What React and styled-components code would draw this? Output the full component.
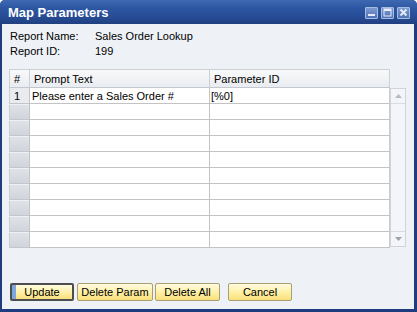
import React from 'react';
import styled, { createGlobalStyle } from 'styled-components';

const Global = createGlobalStyle`
    html, body {
        margin: 0;
        padding: 0;
        background: #ffffff;
    }
    * {
        box-sizing: border-box;
    }
`

const Window = styled.div`
    width: 417px;
    height: 312px;
    display: flex;
    flex-direction: column;
    background: #1e3c7e;
    border-radius: 5px 5px 0 0;
    overflow: hidden;
    font-family: "Liberation Sans", Arial, sans-serif;
    font-size: 11px;
    color: #000;
`

const TitleBar = styled.div`
    height: 24px;
    display: flex;
    align-items: center;
    justify-content: space-between;
    padding: 0 7px 0 8px;
    background: linear-gradient(#4069b3 0%, #2d56a2 35%, #274c95 70%, #203f80 100%);
`

const Title = styled.span`
    color: #fff;
    font-weight: bold;
    font-size: 13px;
`

const Controls = styled.div`
    display: flex;
    gap: 3px;
    margin-top: 1px;
`

const Ctrl = styled.div`
    width: 13px;
    height: 12px;
    background: linear-gradient(#7d9ad2, #5072b6);
    border: 1px solid #a7bce3;
    border-radius: 1px;
    display: flex;
    align-items: center;
    justify-content: center;
`

const Body = styled.div`
    flex: 1;
    margin: 0 3px 3px 2px;
    background: #eef2f7;
    padding: 4px 0 0 7px;
    display: flex;
    flex-direction: column;
`

const InfoRow = styled.div`
    display: flex;
    height: 15px;
    align-items: center;
    padding-left: 1px;
`

const InfoLabel = styled.span`
    width: 85px;
`

const GridWrap = styled.div`
    margin-top: 11px;
    display: flex;
    width: 397px;
`

const Table = styled.div`
    width: 381px;
    display: flex;
    flex-direction: column;
`

const Row = styled.div`
    display: grid;
    grid-template-columns: 20px 180px 181px;
    height: ${p => p.$h}px;
`

const HeadCell = styled.div`
    background: linear-gradient(#f9f9fa, #e9ecf0);
    border-top: 1px solid #cbd0d7;
    border-bottom: 1px solid #c3c8d0;
    border-left: 1px solid #cbd0d7;
    border-right: ${p => p.$last ? '1px solid #cbd0d7' : 'none'};
    padding-left: ${p => p.$pad}px;
    display: flex;
    align-items: center;
`

const NumCell = styled.div`
    border-left: 1px solid #c9ced5;
    border-bottom: 1px solid #c2c6cc;
    background: ${p => p.$filled ? '#e9ebef' : 'linear-gradient(#dfe2e7, #d1d5db)'};
    border-top: ${p => p.$filled ? 'none' : '1px solid #eef0f3'};
    padding-left: 4px;
    display: flex;
    align-items: center;
`

const Cell = styled.div`
    background: #fff;
    border-left: 1px solid #c3c3c3;
    border-bottom: 1px solid #c3c3c3;
    border-right: ${p => p.$last ? '1px solid #c9ced5' : 'none'};
    padding-left: ${p => p.$pad}px;
    display: flex;
    align-items: center;
    white-space: nowrap;
`

const ScrollCol = styled.div`
    width: 16px;
    margin-top: 19px;
    height: 159px;
    background: #f3f5f8;
    border: 1px solid #cfd4db;
    display: flex;
    flex-direction: column;
    justify-content: space-between;
`

const Arrow = styled.div`
    height: 15px;
    display: flex;
    align-items: center;
    justify-content: center;
    border-${p => p.$down ? 'top' : 'bottom'}: 1px solid #d8dce2;
`

const Buttons = styled.div`
    display: flex;
    margin-top: 35px;
    padding-left: 1px;
`

const Btn = styled.div`
    width: ${p => p.$w}px;
    height: 18px;
    margin-right: ${p => p.$mr}px;
    border: ${p => p.$focus ? '2px solid #4d4d4d' : '1px solid #a89f74'};
    border-radius: 2px;
    background: linear-gradient(#fffbe0 0%, #fff1a8 50%, #f7df7a 100%);
    display: flex;
    align-items: center;
    justify-content: center;
    ${p => p.$focus && `
        box-shadow: inset 4px 0 0 #7ea5dd;
    `}
`

const rows = Array.from({ length: 10 }, (_, i) => i === 0
    ? { n: '1', text: 'Please enter a Sales Order #', id: '[%0]' }
    : { n: '', text: '', id: '' });

export default function App() {
    return (
        <>
            <Global />
            <Window>
                <TitleBar>
                    <Title>Map Parameters</Title>
                    <Controls>
                        <Ctrl>
                            <svg width="9" height="9" viewBox="0 0 9 9"><rect x="1" y="6" width="7" height="2" fill="#e6edf9" /></svg>
                        </Ctrl>
                        <Ctrl>
                            <svg width="9" height="9" viewBox="0 0 9 9"><rect x="1" y="1" width="7" height="7" fill="none" stroke="#e6edf9" strokeWidth="1" /><rect x="1" y="1" width="7" height="2" fill="#e6edf9" /></svg>
                        </Ctrl>
                        <Ctrl>
                            <svg width="9" height="9" viewBox="0 0 9 9"><path d="M1.5 1.5 L7.5 7.5 M7.5 1.5 L1.5 7.5" stroke="#e6edf9" strokeWidth="1.8" /></svg>
                        </Ctrl>
                    </Controls>
                </TitleBar>
                <Body>
                    <InfoRow><InfoLabel>Report Name:</InfoLabel><span>Sales Order Lookup</span></InfoRow>
                    <InfoRow><InfoLabel>Report ID:</InfoLabel><span>199</span></InfoRow>
                    <GridWrap>
                        <Table>
                            <Row $h={19}>
                                <HeadCell $pad={4}>#</HeadCell>
                                <HeadCell $pad={4}>Prompt Text</HeadCell>
                                <HeadCell $pad={4} $last>Parameter ID</HeadCell>
                            </Row>
                            {rows.map((r, i) => (
                                <Row key={i} $h={16}>
                                    <NumCell $filled={!!r.n}>{r.n}</NumCell>
                                    <Cell $pad={2}>{r.text}</Cell>
                                    <Cell $pad={1} $last>{r.id}</Cell>
                                </Row>
                            ))}
                        </Table>
                        <ScrollCol>
                            <Arrow>
                                <svg width="7" height="4" viewBox="0 0 7 4"><path d="M0 4 L3.5 0 L7 4 Z" fill="#b4bcc6" /></svg>
                            </Arrow>
                            <Arrow $down>
                                <svg width="7" height="4" viewBox="0 0 7 4"><path d="M0 0 L3.5 4 L7 0 Z" fill="#9aa3ae" /></svg>
                            </Arrow>
                        </ScrollCol>
                    </GridWrap>
                    <Buttons>
                        <Btn $w={64} $mr={3} $focus>Update</Btn>
                        <Btn $w={76} $mr={2}>Delete Param</Btn>
                        <Btn $w={65} $mr={8}>Delete All</Btn>
                        <Btn $w={64} $mr={0}>Cancel</Btn>
                    </Buttons>
                </Body>
            </Window>
        </>
    );
}
